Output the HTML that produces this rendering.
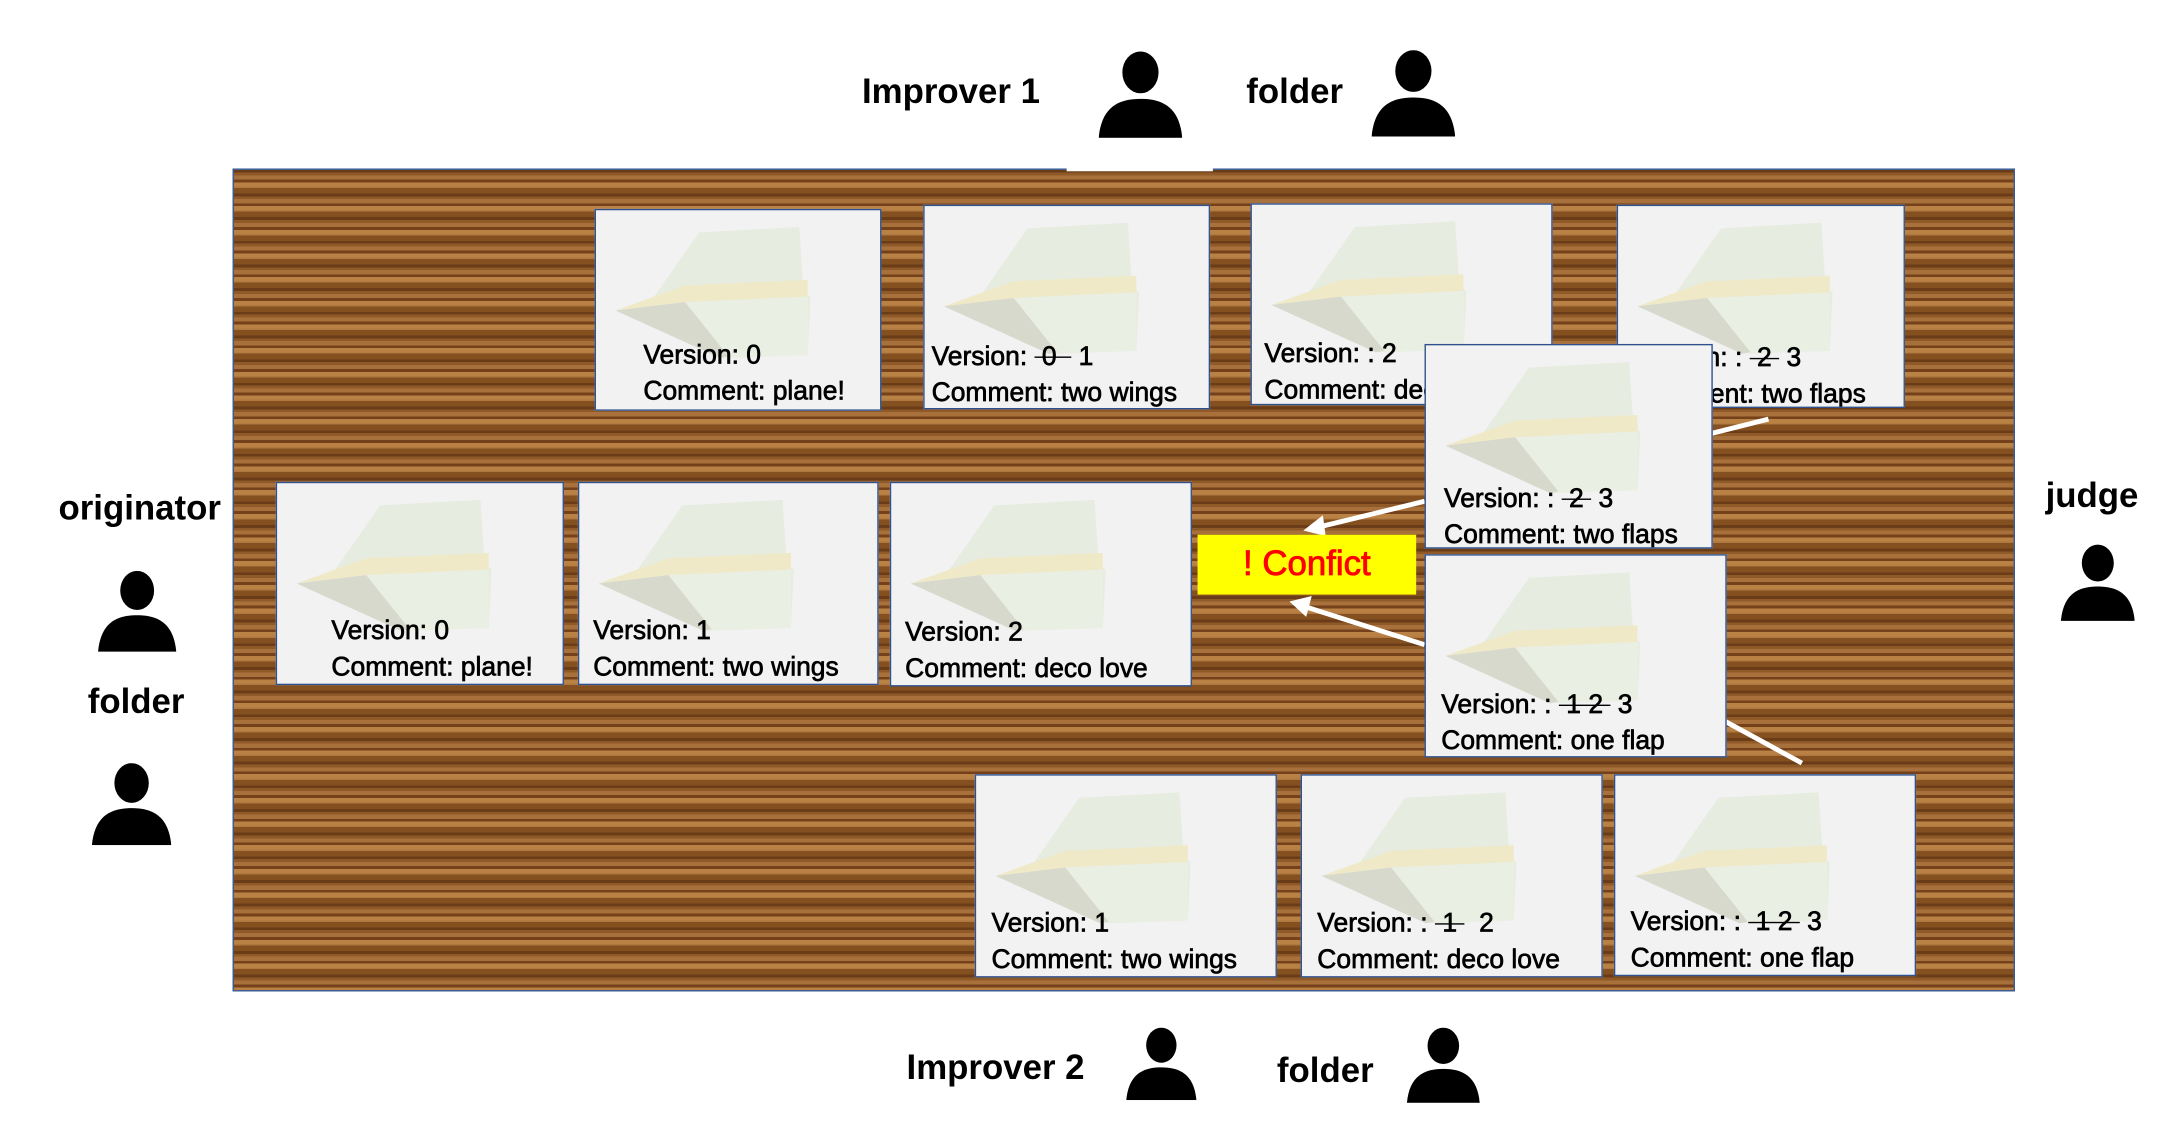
<!DOCTYPE html>
<html><head><meta charset="utf-8"><style>
html,body{margin:0;padding:0;background:#fff;width:2181px;height:1129px;overflow:hidden}
#w{position:absolute;left:0;top:0;width:1560px;height:808px;transform:scale(1.3925);transform-origin:0 0;font-family:"Liberation Sans",sans-serif}
.board{position:absolute;left:167px;top:121px;width:1278px;height:589px;border:1.5px solid #2f528f;
background:
repeating-linear-gradient(180deg,rgba(60,25,5,.45) 0 2px,rgba(0,0,0,0) 2px 9px,rgba(210,150,80,.3) 9px 12px,rgba(0,0,0,0) 12px 17px),
repeating-linear-gradient(180deg,#8f5a28 0 4px,#a8703a 4px 7px,#74411a 7px 9px,#b07840 9px 13px,#84501f 13px 17px);}
.gap{position:absolute;left:766px;top:119px;width:105px;height:4px;background:#fff}
.c{position:absolute;background:#f2f2f2;border:1.5px solid #2f528f;box-sizing:border-box;overflow:hidden}
.c svg{position:absolute;left:4px;top:4px}
.t{position:absolute;font-size:19px;color:#000;line-height:26px;white-space:nowrap;-webkit-text-stroke:.5px #000}
.s{text-decoration:line-through}
.h{position:absolute;font-weight:bold;font-size:25px;color:#000;white-space:nowrap}
.p{position:absolute}
</style></head><body><div id="w">
<svg width="0" height="0" style="position:absolute"><defs>
<g id="pl">
<polygon points="28,72 70,12 142,8 145,55 150,58 148,100 85,102 60,75" fill="#e6ecdf"/>
<polygon points="10,68 60,50 148,46 148,58 60,62" fill="#efe9c8"/>
<polygon points="10,68 60,62 95,100 85,102" fill="#d6d9cc"/>
<polygon points="60,62 148,58 148,100 92,102" fill="#eaefe4"/>
</g></defs></svg>
<div class="h" style="left:619px;top:52px">Improver 1</div>
<div class="h" style="left:895px;top:52px">folder</div>
<div class="h" style="left:42px;top:351px">originator</div>
<div class="h" style="left:63px;top:490px">folder</div>
<div class="h" style="left:1469px;top:342px">judge</div>
<div class="h" style="left:651px;top:753px">Improver 2</div>
<div class="h" style="left:917px;top:755px">folder</div>
<svg class="p" style="left:789px;top:37px" width="60" height="62" viewBox="0 0 60 62"><ellipse cx="30" cy="15" rx="13" ry="15" fill="#000"/><path d="M0 62 C2 40 14 34 30 34 C46 34 58 40 60 62Z" fill="#000"/></svg>
<svg class="p" style="left:985px;top:36px" width="60" height="62" viewBox="0 0 60 62"><ellipse cx="30" cy="15" rx="13" ry="15" fill="#000"/><path d="M0 62 C2 40 14 34 30 34 C46 34 58 40 60 62Z" fill="#000"/></svg>
<svg class="p" style="left:70px;top:410px" width="57" height="58" viewBox="0 0 60 62"><ellipse cx="30" cy="15" rx="13" ry="15" fill="#000"/><path d="M0 62 C2 40 14 34 30 34 C46 34 58 40 60 62Z" fill="#000"/></svg>
<svg class="p" style="left:66px;top:548px" width="57" height="59" viewBox="0 0 60 62"><ellipse cx="30" cy="15" rx="13" ry="15" fill="#000"/><path d="M0 62 C2 40 14 34 30 34 C46 34 58 40 60 62Z" fill="#000"/></svg>
<svg class="p" style="left:1480px;top:391px" width="53" height="55" viewBox="0 0 60 62"><ellipse cx="30" cy="15" rx="13" ry="15" fill="#000"/><path d="M0 62 C2 40 14 34 30 34 C46 34 58 40 60 62Z" fill="#000"/></svg>
<svg class="p" style="left:808px;top:738px" width="52" height="52" viewBox="0 0 60 62"><ellipse cx="30" cy="15" rx="13" ry="15" fill="#000"/><path d="M0 62 C2 40 14 34 30 34 C46 34 58 40 60 62Z" fill="#000"/></svg>
<svg class="p" style="left:1010px;top:738px" width="53" height="54" viewBox="0 0 60 62"><ellipse cx="30" cy="15" rx="13" ry="15" fill="#000"/><path d="M0 62 C2 40 14 34 30 34 C46 34 58 40 60 62Z" fill="#000"/></svg>

<div class="board"></div>
<div class="gap"></div>

<div class="c" style="left:427px;top:150px;width:206px;height:145px"><svg width="150" height="105"><use href="#pl"/></svg><div class="t" style="left:34px;top:92px">Version: 0<br>Comment: plane!</div></div>
<div class="c" style="left:663px;top:147px;width:206px;height:147px"><svg width="150" height="105"><use href="#pl"/></svg><div class="t" style="left:5px;top:96px">Version: <span class="s">&nbsp;0&nbsp;&nbsp;</span>&nbsp;1<br>Comment: two wings</div></div>
<div class="c" style="left:898px;top:146px;width:217px;height:145px"><svg width="150" height="105"><use href="#pl"/></svg><div class="t" style="left:9px;top:95px">Version: : 2<br>Comment: deco love</div></div>
<div class="c" style="left:1161px;top:147px;width:207px;height:146px"><svg width="150" height="105"><use href="#pl"/></svg><div class="t" style="left:10px;top:97px">Version: : <span class="s">&nbsp;2&nbsp;</span> 3<br>Comment: two flaps</div></div>

<div class="c" style="left:198px;top:346px;width:207px;height:146px"><svg width="150" height="105"><use href="#pl"/></svg><div class="t" style="left:39px;top:94px">Version: 0<br>Comment: plane!</div></div>
<div class="c" style="left:415px;top:346px;width:216px;height:146px"><svg width="150" height="105"><use href="#pl"/></svg><div class="t" style="left:10px;top:94px">Version: 1<br>Comment: two wings</div></div>
<div class="c" style="left:639px;top:346px;width:217px;height:147px"><svg width="150" height="105"><use href="#pl"/></svg><div class="t" style="left:10px;top:95px">Version: 2<br>Comment: deco love</div></div>

<svg class="p" style="left:0;top:0" width="1560" height="808"><g stroke="#fff" stroke-width="3.5" fill="#fff">
<line x1="1270" y1="301" x2="1226" y2="312"/>
<line x1="1023" y1="360" x2="945" y2="379"/><polygon points="936,381 950,370 952,385" stroke="none"/>
<line x1="1023" y1="463" x2="935" y2="435"/><polygon points="926,432 942,428 938,443" stroke="none"/>
<line x1="1237" y1="517" x2="1294" y2="548"/></g></svg>

<div class="c" style="left:1023px;top:247px;width:207px;height:147px"><svg width="150" height="105"><use href="#pl"/></svg><div class="t" style="left:13px;top:98px">Version: : <span class="s">&nbsp;2&nbsp;</span> 3<br>Comment: two flaps</div></div>
<div class="c" style="left:1023px;top:398px;width:217px;height:146px"><svg width="150" height="105"><use href="#pl"/></svg><div class="t" style="left:11px;top:95px">Version: : <span class="s">&nbsp;1 2&nbsp;</span> 3<br>Comment: one flap</div></div>

<div style="position:absolute;left:860px;top:384px;width:157px;height:43px;background:#ffff00;color:#f00;font-size:25px;line-height:43px;text-align:center;-webkit-text-stroke:.6px #f00">! Confict</div>

<div class="c" style="left:700px;top:556px;width:217px;height:146px"><svg width="150" height="105"><use href="#pl"/></svg><div class="t" style="left:11px;top:94px">Version: 1<br>Comment: two wings</div></div>
<div class="c" style="left:934px;top:556px;width:217px;height:146px"><svg width="150" height="105"><use href="#pl"/></svg><div class="t" style="left:11px;top:94px">Version: : <span class="s">&nbsp;1&nbsp;</span>&nbsp; 2<br>Comment: deco love</div></div>
<div class="c" style="left:1159px;top:556px;width:217px;height:145px"><svg width="150" height="105"><use href="#pl"/></svg><div class="t" style="left:11px;top:93px">Version: : <span class="s">&nbsp;1 2&nbsp;</span> 3<br>Comment: one flap</div></div>
</div></body></html>
